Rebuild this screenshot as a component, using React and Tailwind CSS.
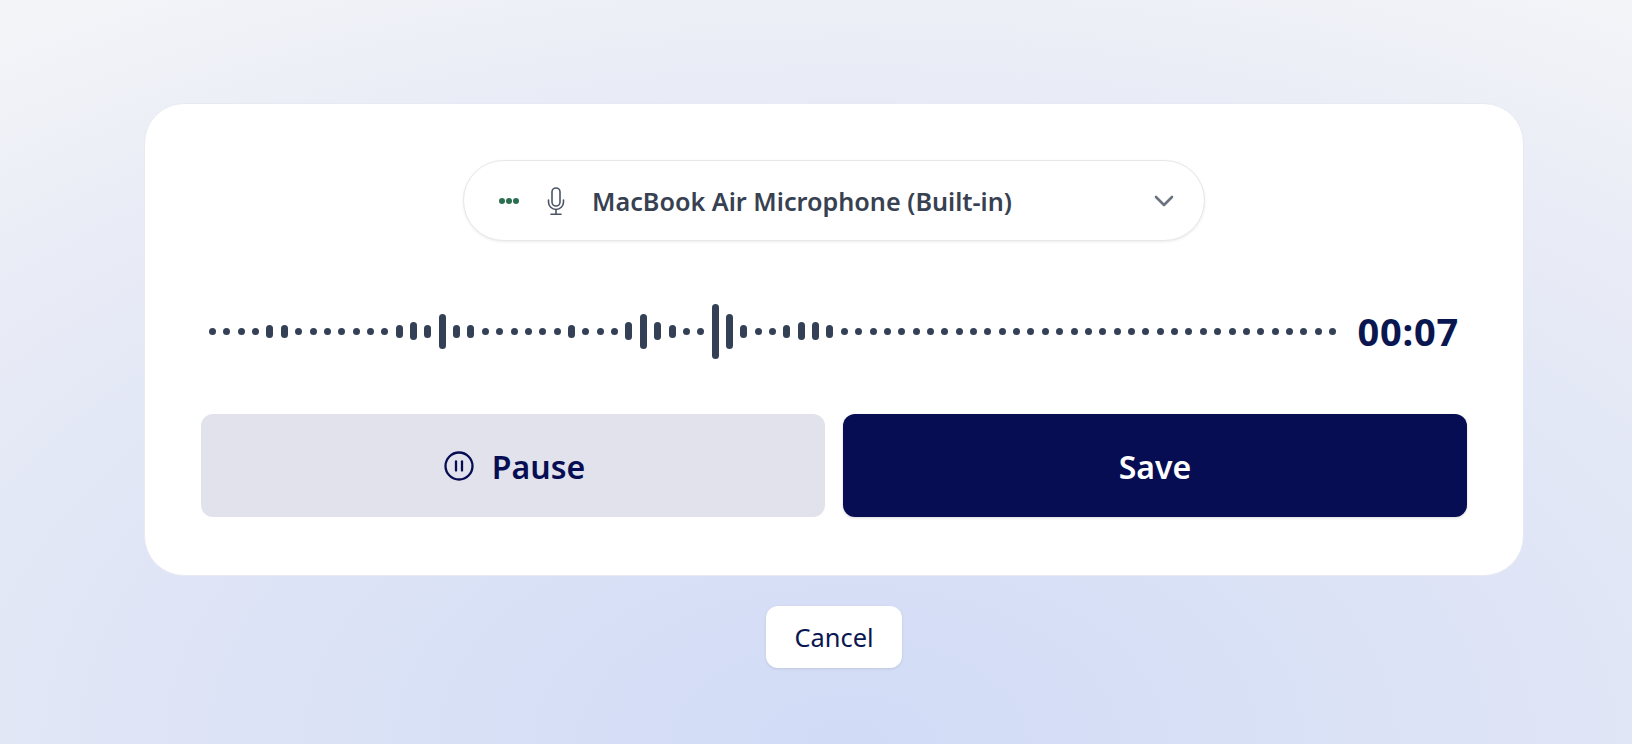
import React from "react";

const FONT = "font-['Noto_Sans','Open_Sans',sans-serif]";

// bar heights by position, everything not listed is a plain dot
const TALL = {
  4: 13, 5: 13, 13: 13, 14: 18, 15: 13, 16: 35, 17: 13, 18: 13, 25: 13,
  29: 18, 30: 35, 31: 18, 32: 13, 35: 55, 36: 35, 37: 13,
  40: 13, 41: 18, 42: 18, 43: 13,
};
const BARS = Array.from({ length: 79 }, (_, i) => TALL[i] ?? 7);

function MicIcon() {
  return (
    <svg width="22" height="30" viewBox="0 0 22 30" fill="none" stroke="#4b5563" strokeWidth="1.6" strokeLinecap="round">
      <rect x="7" y="2" width="8" height="18" rx="4" />
      <path d="M3.5 14v2a7.5 7.5 0 0 0 15 0v-2" />
      <path d="M11 23.5v4.5" />
      <path d="M6 28.2h10" />
    </svg>
  );
}

function Chevron() {
  return (
    <svg width="22" height="14" viewBox="0 0 22 14" fill="none" stroke="#6b7280" strokeWidth="2.6" strokeLinecap="round" strokeLinejoin="round">
      <path d="M3 3l8 8 8-8" />
    </svg>
  );
}

function PauseIcon() {
  return (
    <svg width="30" height="30" viewBox="0 0 30 30" fill="none" stroke="#060d52" strokeWidth="2.3" strokeLinecap="round">
      <circle cx="15" cy="15" r="13.5" />
      <path d="M12 10.5v9" />
      <path d="M18 10.5v9" />
    </svg>
  );
}

export default function App() {
  return (
    <div className={`${FONT} h-[744px] overflow-hidden bg-[radial-gradient(ellipse_90%_115%_at_52%_100%,#d1dbf6_0%,#dfe5f6_50%,#e9ecf6_78%,#f3f4f8_100%)] pt-[103px] pl-[144px] pr-[108px] flex flex-col items-center`}>
      <div className="w-full h-[473px] bg-white rounded-[40px] border border-[#e8eaf3] px-[56px] pt-[56px] flex flex-col">
        <div className="self-center w-[742px] h-[81px] shrink-0 rounded-full border border-[#e5e7eb] bg-white shadow-[0_1px_3px_rgba(0,0,0,0.08)] flex items-center pl-[35px] pr-[29px]">
          <div className="flex gap-[1px] w-[21px]">
            <span className="w-[6px] h-[6px] rounded-full bg-[#2a6f4f]" />
            <span className="w-[6px] h-[6px] rounded-full bg-[#2a6f4f]" />
            <span className="w-[6px] h-[6px] rounded-full bg-[#2a6f4f]" />
          </div>
          <div className="ml-[25px] w-[22px] flex">
            <MicIcon />
          </div>
          <span className="ml-[25px] flex-1 pt-[2px] text-[25.2px] font-semibold text-[#374151]">MacBook Air Microphone (Built-in)</span>
          <Chevron />
        </div>

        <div className="mt-[52px] h-[76px] flex items-center pl-[8px] pr-[8px]">
          <div className="w-[1128px] flex items-center justify-between">
            {BARS.map((h, i) => (
              <span key={i} className="block w-[7px] rounded-full bg-[#334056]" style={{ height: h }} />
            ))}
          </div>
          <span className="ml-auto text-[38px] font-bold text-[#0a1650] tracking-[0.8px]">00:07</span>
        </div>

        <div className="mt-[45px] grid grid-cols-2 gap-[18px]">
          <button type="button" className="h-[103px] rounded-[12px] bg-[#e1e2eb] flex items-center justify-center gap-[18px] pl-[3px] text-[32px] font-semibold text-[#060d52]">
            <PauseIcon />
            <span className="pt-[3px]">Pause</span>
          </button>
          <button type="button" className="h-[103px] rounded-[12px] bg-[#060d52] shadow-[0_1px_3px_rgba(0,0,0,0.15)] flex items-center justify-center text-[32px] font-semibold text-white">
            <span className="pt-[3px]">Save</span>
          </button>
        </div>
      </div>

      <button type="button" className="mt-[30px] w-[136px] h-[62px] rounded-[12px] bg-white shadow-[0_1px_3px_rgba(0,0,0,0.1)] text-[25.4px] text-[#0a1650]">
        Cancel
      </button>
    </div>
  );
}
